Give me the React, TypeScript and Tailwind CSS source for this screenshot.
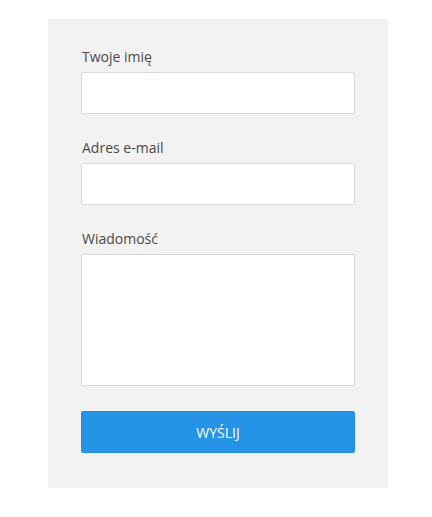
export default function App() {
  return (
    <div className="min-h-[517px] w-[432px] bg-white pt-[19px] pl-[48px]" style={{ fontFamily: '"Open Sans", "Noto Sans", sans-serif' }}>
      <form className="w-[340px] bg-[#f2f2f2] px-[33px] pt-[28px] pb-[35px]">
        <div className="mb-[24px]">
          <label className="mb-[5px] block pl-[1px] text-[14px] leading-[20px] text-[#4a4a4a]">Twoje imię</label>
          <input type="text" className="block h-[42px] w-full rounded-[2px] border border-[#d9d9d9] bg-white" />
        </div>
        <div className="mb-[24px]">
          <label className="mb-[5px] block pl-[1px] text-[14px] leading-[20px] text-[#4a4a4a]">Adres e-mail</label>
          <input type="email" className="block h-[42px] w-full rounded-[2px] border border-[#d9d9d9] bg-white" />
        </div>
        <div className="mb-[25px]">
          <label className="mb-[5px] block pl-[1px] text-[14px] leading-[20px] text-[#4a4a4a]">Wiadomość</label>
          <textarea className="block h-[132px] w-full resize-none rounded-[2px] border border-[#d9d9d9] bg-white" />
        </div>
        <button type="button" className="flex h-[42px] w-full items-center justify-center rounded-[2px] border border-[#2290e0] bg-[#2594e6] text-[14px] font-medium text-white">
          WYŚLIJ
        </button>
      </form>
    </div>
  );
}
